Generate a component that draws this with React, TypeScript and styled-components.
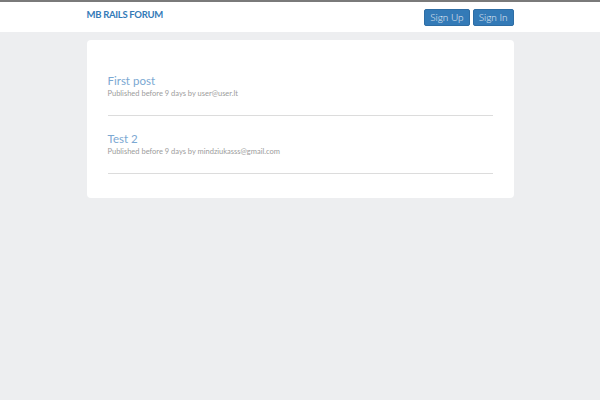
import React from "react";
import styled, { createGlobalStyle } from "styled-components";

const Global = createGlobalStyle`
  html, body { margin: 0; padding: 0; }
  body {
    background: #edeef0;
    font-family: Lato, "Open Sans", sans-serif;
    min-height: 400px;
  }
`;

const Header = styled.header`
  background: #ffffff;
  border-top: 2px solid #7a7a7a;
  height: 30px;
`;

const Container = styled.div`
  width: 427px;
  margin: 0 auto;
  box-sizing: border-box;
`;

const HeaderInner = styled(Container)`
  display: flex;
  align-items: center;
  justify-content: space-between;
  height: 100%;
`;

const Brand = styled.a`
  color: #337ab7;
  font-weight: 700;
  font-size: 9.5px;
  letter-spacing: -0.3px;
  text-decoration: none;
  margin-top: -6px;
`;

const Nav = styled.div`
  display: flex;
  gap: 3px;
`;

const Button = styled.button<{ $px: number }>`
  background: #337ab7;
  border: 1px solid #2e6da4;
  border-radius: 2px;
  color: #e6eef6;
  font-family: Lato, sans-serif;
  font-weight: 300;
  font-size: 10px;
  height: 17px;
  padding: 0 ${(p) => p.$px}px;
  line-height: 15px;
  cursor: pointer;
`;

const Main = styled(Container)`
  padding-top: 8px;
`;

const Card = styled.section`
  background: #ffffff;
  border-radius: 4px;
  padding: 22px 21px 24px;
`;

const Post = styled.article`
  padding: 11px 0 16px;
  border-bottom: 1px solid #dcdcdc;
  & + & {
    padding-top: 15px;
  }
`;

const Title = styled.a`
  display: block;
  color: #7ba8d2;
  font-size: 11.5px;
  font-weight: 400;
  text-decoration: none;
  line-height: 16px;
`;

const Meta = styled.div`
  color: #9c9c9c;
  font-size: 7.5px;
  line-height: 10px;
`;

const posts = [
  { title: "First post", meta: "Published before 9 days by user@user.lt" },
  { title: "Test 2", meta: "Published before 9 days by mindziukasss@gmail.com" },
];

export default function App() {
  return (
    <>
      <Global />
      <Header>
        <HeaderInner>
          <Brand href="#">MB RAILS FORUM</Brand>
          <Nav>
            <Button $px={5}>Sign Up</Button>
            <Button $px={5}>Sign In</Button>
          </Nav>
        </HeaderInner>
      </Header>
      <Main>
        <Card>
          {posts.map((p) => (
            <Post key={p.title}>
              <Title href="#">{p.title}</Title>
              <Meta>{p.meta}</Meta>
            </Post>
          ))}
        </Card>
      </Main>
    </>
  );
}
